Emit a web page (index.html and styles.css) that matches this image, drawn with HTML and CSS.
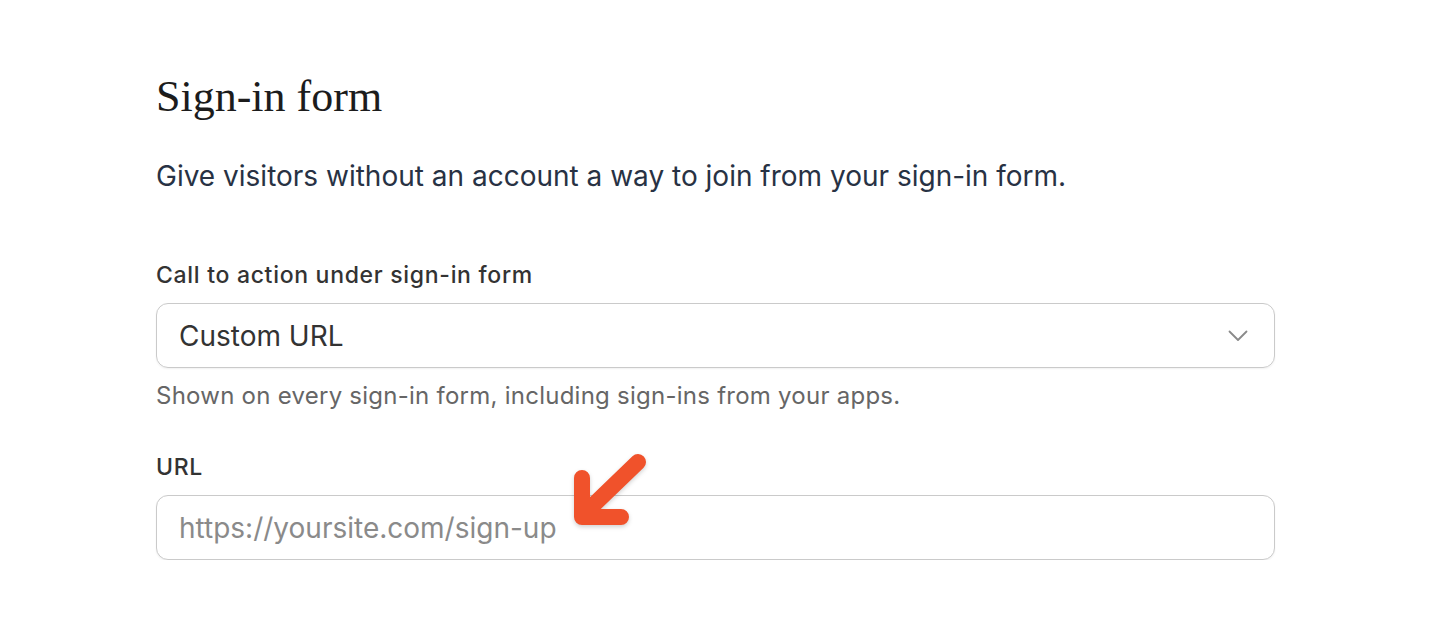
FILE: index.html
```html
<!DOCTYPE html>
<html lang="en">
<head>
<meta charset="utf-8">
<title>Sign-in form</title>
<link rel="stylesheet" href="styles.css">
</head>
<body>
<main class="page">
  <h1 class="title">Sign-in form</h1>
  <p class="intro">Give visitors without an account a way to join from your sign-in form.</p>

  <div class="field field-cta">
    <label class="label" for="cta">Call to action under sign-in form</label>
    <div class="select">
      <span class="select-value" id="cta">Custom URL</span>
      <svg class="chevron" width="20" height="12" viewBox="0 0 20 12" aria-hidden="true">
        <path d="M1.5 1.5 L10 10 L18.5 1.5" fill="none" stroke="#8a8a8a" stroke-width="1.8" stroke-linecap="round" stroke-linejoin="round"/>
      </svg>
    </div>
    <p class="help">Shown on every sign-in form, including sign-ins from your apps.</p>
  </div>

  <div class="field field-url">
    <label class="label" for="url">URL</label>
    <div class="input-wrap">
      <input class="input" id="url" type="text" placeholder="https://yoursite.com/sign-up">
      <svg class="arrow" width="90" height="90" viewBox="0 0 90 90" aria-hidden="true">
        <path d="M80 12 L25 65 M24 28 L24 67 L63 67" fill="none" stroke="#f0522b" stroke-width="16" stroke-linecap="round" stroke-linejoin="round"/>
      </svg>
    </div>
  </div>
</main>
</body>
</html>
```

FILE: styles.css
```css
html, body {
  margin: 0;
  padding: 0;
  background: #ffffff;
}

body {
  font-family: Inter, "Liberation Sans", Arial, sans-serif;
  color: #2a2a2a;
}

.page {
  width: 1119px;
  margin-left: 156px;
  padding-top: 71px;
}

.title {
  margin: 0;
  font-family: "Liberation Serif", "Times New Roman", serif;
  font-weight: 400;
  font-size: 44px;
  line-height: 52px;
  color: #1c1c1c;
}

.intro {
  margin: 35px 0 0;
  font-size: 28px;
  line-height: 36px;
  color: #283244;
}

.field {
  display: flex;
  flex-direction: column;
}

.field-cta {
  margin-top: 67px;
}

.field-url {
  margin-top: 42px;
}

.label {
  font-size: 23px;
  font-weight: 500;
  line-height: 28px;
  letter-spacing: 0.7px;
  color: #333333;
}

.select {
  margin-top: 14px;
  height: 65px;
  box-sizing: border-box;
  border: 1.5px solid #cacaca;
  border-radius: 12px;
  box-shadow: 0 1px 2px rgba(0, 0, 0, 0.06);
  display: flex;
  align-items: center;
  justify-content: space-between;
  padding: 0 26px 0 22px;
}

.select-value {
  font-size: 28px;
  color: #333333;
}

.chevron {
  display: block;
}

.help {
  margin: 13px 0 0;
  font-size: 24px;
  line-height: 30px;
  letter-spacing: 0.25px;
  color: #666666;
}

.input-wrap {
  position: relative;
  margin-top: 14px;
}

.input {
  display: block;
  width: 100%;
  height: 65px;
  box-sizing: border-box;
  border: 1.5px solid #cacaca;
  border-radius: 12px;
  box-shadow: 0 1px 2px rgba(0, 0, 0, 0.06);
  padding: 0 22px;
  font-family: Inter, "Liberation Sans", Arial, sans-serif;
  font-size: 28px;
  color: #333333;
  background: #ffffff;
  outline: none;
}

.input::placeholder {
  color: #8a8a8a;
}

.arrow {
  position: absolute;
  left: 402px;
  top: -45px;
  filter: drop-shadow(0 2px 2px rgba(0, 0, 0, 0.18));
}
```
